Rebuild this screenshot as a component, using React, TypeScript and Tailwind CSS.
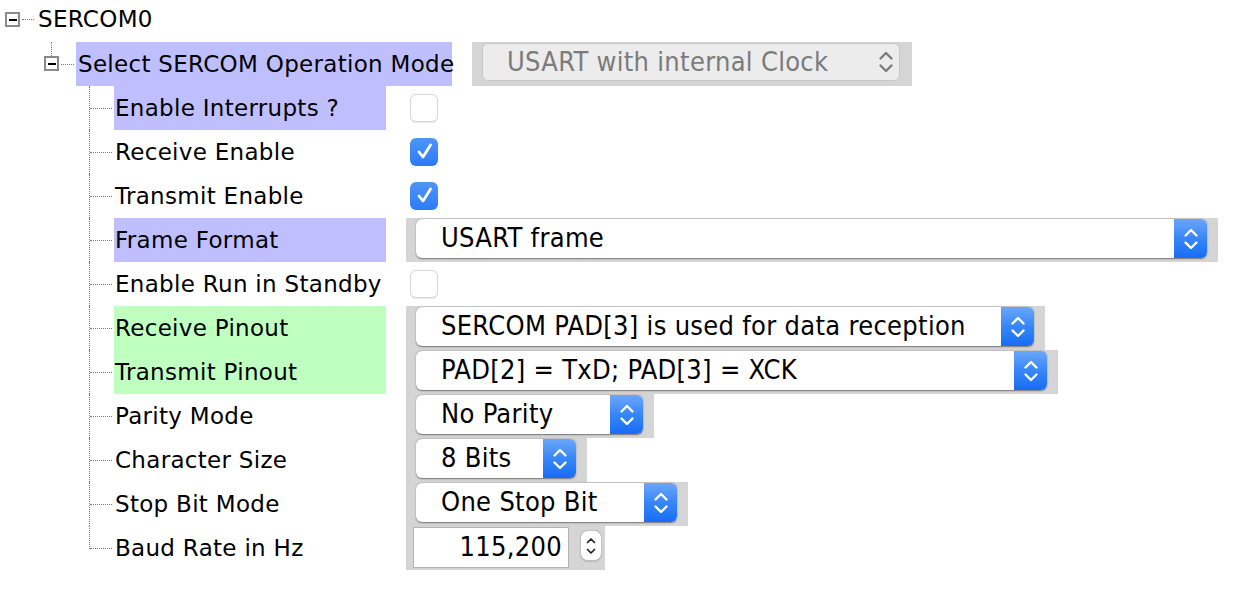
import React from 'react';

type Control =
    | { kind: 'check'; checked: boolean }
    | { kind: 'select'; value: string; width: string }
    | { kind: 'number'; value: string };

interface SettingRow {
    label: string;
    tone?: 'purple' | 'green';
    control: Control;
}

const TREE_FONT = "font-['DejaVu_Sans',sans-serif] text-[23px] tracking-[0.3px] text-black";
const COMBO_FONT = "font-['DejaVu_Sans_Condensed','Open_Sans',sans-serif] text-[27px] tracking-[0.3px]";

const rows: SettingRow[] = [
    { label: 'Enable Interrupts ?', tone: 'purple', control: { kind: 'check', checked: false } },
    { label: 'Receive Enable', control: { kind: 'check', checked: true } },
    { label: 'Transmit Enable', control: { kind: 'check', checked: true } },
    { label: 'Frame Format', tone: 'purple', control: { kind: 'select', value: 'USART frame', width: 'w-[791px]' } },
    { label: 'Enable Run in Standby', control: { kind: 'check', checked: false } },
    { label: 'Receive Pinout', tone: 'green', control: { kind: 'select', value: 'SERCOM PAD[3] is used for data reception', width: 'w-[618px]' } },
    { label: 'Transmit Pinout', tone: 'green', control: { kind: 'select', value: 'PAD[2] = TxD; PAD[3] = XCK', width: 'w-[631px]' } },
    { label: 'Parity Mode', control: { kind: 'select', value: 'No Parity', width: 'w-[227px]' } },
    { label: 'Character Size', control: { kind: 'select', value: '8 Bits', width: 'w-[160px]' } },
    { label: 'Stop Bit Mode', control: { kind: 'select', value: 'One Stop Bit', width: 'w-[261px]' } },
    { label: 'Baud Rate in Hz', control: { kind: 'number', value: '115,200' } },
];

// little [-] handle of the tree
const Expander: React.FC = () => (
    <div className="w-[15px] h-[15px] border-2 border-[#8a8a8a] bg-white flex items-center justify-center shrink-0">
        <span className="block w-[8px] h-[2px] bg-black"></span>
    </div>
);

const Chevrons: React.FC<{ color: string }> = ({ color }) => (
    <svg width="16" height="26" viewBox="0 0 16 26" fill="none" stroke={color} strokeWidth="2.4" strokeLinecap="round" strokeLinejoin="round">
        <path d="M2.5 9.5 L8 4 L13.5 9.5" />
        <path d="M2.5 16.5 L8 22 L13.5 16.5" />
    </svg>
);

const CheckBox: React.FC<{ checked: boolean }> = ({ checked }) =>
    checked ? (
        <div className="w-[28px] h-[28px] rounded-[6px] bg-gradient-to-b from-[#4f95f8] to-[#2a7bf6] flex items-center justify-center">
            <svg width="28" height="28" viewBox="0 0 28 28" fill="none" stroke="white" strokeWidth="2.8" strokeLinecap="round" strokeLinejoin="round">
                <path d="M9 14 L13 19 L20.5 7" />
            </svg>
        </div>
    ) : (
        <div className="w-[28px] h-[28px] rounded-[6px] bg-white border border-[#d6d6d6] shadow-[0_0.5px_1px_rgba(0,0,0,0.1)]"></div>
    );

const Combo: React.FC<{ value: string; width: string }> = ({ value, width }) => (
    <div className="h-[44px] bg-[#d5d5d5] pl-[10px] pr-[11px] pt-[1px]">
        <div className={`${width} h-[39px] flex rounded-[6px] bg-white shadow-[0_0.5px_1.5px_rgba(0,0,0,0.45)]`}>
            <div className={`flex-1 flex items-center pl-[25px] ${COMBO_FONT} text-black whitespace-nowrap`}>{value}</div>
            <div className="w-[33px] rounded-r-[6px] bg-gradient-to-b from-[#6aa6fa] via-[#3786f7] to-[#166cf5] flex items-center justify-center">
                <Chevrons color="white" />
            </div>
        </div>
    </div>
);

const NumberField: React.FC<{ value: string }> = ({ value }) => (
    <div className="h-[44px] bg-[#d5d5d5] pl-[7px] pr-[3px] pt-[1px] flex items-start gap-[11px]">
        <div className={`w-[156px] h-[41px] bg-white border border-[#b3b3b3] flex items-center justify-end pr-[6px] ${COMBO_FONT} text-black`}>
            {value}
        </div>
        <div className="mt-[3px] w-[22px] h-[31px] rounded-[8px] bg-white border border-[#c2c2c2] shadow-[0_0.5px_1px_rgba(0,0,0,0.15)] flex items-center justify-center">
            <svg width="12" height="24" viewBox="0 0 12 24" fill="none" stroke="#222" strokeWidth="1.7" strokeLinecap="round" strokeLinejoin="round">
                <path d="M2.5 8.5 L6 5 L9.5 8.5" />
                <path d="M2.5 15.5 L6 19 L9.5 15.5" />
            </svg>
        </div>
    </div>
);

const App: React.FC = () => {
    return (
        <div className={`w-[1240px] h-[606px] bg-white overflow-hidden ${TREE_FONT}`}>
            {/* root node */}
            <div className="h-[42px] flex items-center pb-[3px]">
                <div className="ml-[5px]"><Expander /></div>
                <span className="ml-[2px] w-[12px] border-t border-dotted border-[#7a7a7a]"></span>
                <span className="ml-[4px] leading-none">SERCOM0</span>
            </div>

            {/* operation mode node */}
            <div className="h-[44px] flex">
                <div className="ml-[44px] w-[15px] flex flex-col">
                    <span className="ml-[7px] h-[14px] border-l border-dotted border-[#7a7a7a]"></span>
                    <Expander />
                </div>
                <div className="flex items-center">
                    <span className="ml-[2px] w-[13px] border-t border-dotted border-[#7a7a7a]"></span>
                </div>
                <div className="ml-[2px] w-[376px] bg-[#bfbfff] flex items-center pl-[2px] whitespace-nowrap">
                    Select SERCOM Operation Mode
                </div>
                <div className="ml-[20px] h-[44px] bg-[#d5d5d5] pl-[10px] pr-[12px] pt-[1px]">
                    <div className="w-[418px] h-[38px] flex items-center rounded-[6px] bg-[#ececec] border border-[#c9c9c9]">
                        <div className={`flex-1 pl-[24px] ${COMBO_FONT} text-[#7b7b7b] whitespace-nowrap`}>USART with internal Clock</div>
                        <div className="pr-[5px] flex items-center">
                            <Chevrons color="#7b7b7b" />
                        </div>
                    </div>
                </div>
            </div>

            {/* settings */}
            {rows.map((row, i) => {
                const last = i === rows.length - 1;
                const tone = row.tone === 'purple' ? 'bg-[#bfbfff]' : row.tone === 'green' ? 'bg-[#bfffbf]' : '';
                return (
                    <div key={row.label} className="h-[44px] flex">
                        <div className="ml-[89px] w-[1px] flex flex-col">
                            <span className={`border-l border-dotted border-[#7a7a7a] ${last ? 'h-[23px]' : 'h-[44px]'}`}></span>
                        </div>
                        <div className="flex items-center">
                            <span className="w-[22px] border-t border-dotted border-[#7a7a7a]"></span>
                        </div>
                        <div className={`ml-[2px] w-[272px] flex items-center pl-[1px] whitespace-nowrap ${tone}`}>
                            {row.label}
                        </div>
                        <div className="ml-[20px] flex items-center">
                            {row.control.kind === 'check' && (
                                <div className="ml-[4px]"><CheckBox checked={row.control.checked} /></div>
                            )}
                            {row.control.kind === 'select' && <Combo value={row.control.value} width={row.control.width} />}
                            {row.control.kind === 'number' && <NumberField value={row.control.value} />}
                        </div>
                    </div>
                );
            })}
        </div>
    );
};

export default App;
